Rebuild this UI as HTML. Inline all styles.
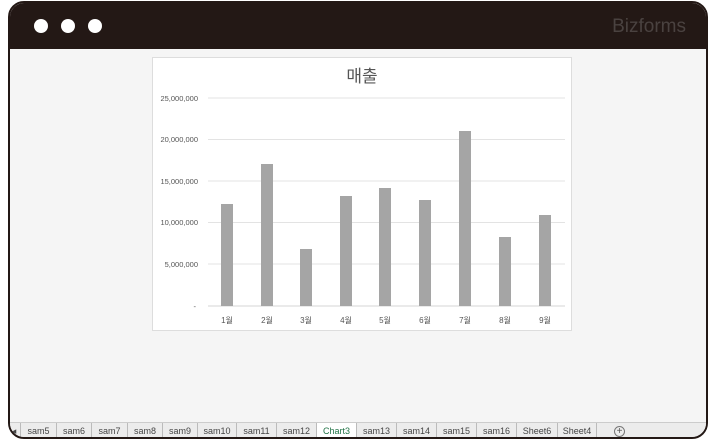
<!DOCTYPE html><html><head><meta charset="utf-8"><style>
*{margin:0;padding:0;box-sizing:border-box}
body{width:715px;height:440px;background:#fff;position:relative;overflow:hidden;font-family:"Liberation Sans","Noto Sans CJK KR",sans-serif}
.frame{position:absolute;left:8px;top:1px;width:700px;height:438px;border:2px solid #231815;border-radius:16px;background:#f5f5f5;overflow:hidden}
.hd{position:absolute;left:0;top:0;right:0;height:46px;background:#231815}
.dot{position:absolute;top:16px;width:14px;height:14px;border-radius:50%;background:#fff}
.logo{position:absolute;right:20px;top:13px;color:#4a4240;font-size:19px}
.chart{position:absolute;left:142px;top:54px;width:420px;height:274px;background:#fff;border:1px solid #ddd}
.tabs{position:absolute;left:-2px;top:419px;right:0;height:17px;background:#ececec;border-top:1px solid #ccc;font-size:9px;color:#444}
.tab{position:absolute;top:0;height:17px;line-height:16px;text-align:center;border-right:1px solid #bbb}
</style></head><body>
<div class="frame">
<div class="hd"><div class="dot" style="left:24px"></div><div class="dot" style="left:51px"></div><div class="dot" style="left:78px"></div><div class="logo">Bizforms</div></div>
<div class="chart">
<svg width="420" height="274" viewBox="152 57 420 274" style="position:absolute;left:-1px;top:-1px" font-family="Liberation Sans,Noto Sans CJK KR,sans-serif">
<text x="362" y="82" font-size="17" fill="#555" text-anchor="middle">매출</text>
<g stroke="#e3e3e3" stroke-width="1">
<line x1="208" x2="565" y1="98" y2="98"/><line x1="208" x2="565" y1="139.5" y2="139.5"/><line x1="208" x2="565" y1="181" y2="181"/><line x1="208" x2="565" y1="222.5" y2="222.5"/><line x1="208" x2="565" y1="264" y2="264"/><line x1="208" x2="565" y1="306" y2="306" stroke="#d5d5d5"/></g>
<g font-size="7.5" fill="#555" text-anchor="end">
<text x="198" y="101">25,000,000</text><text x="198" y="142">20,000,000</text><text x="198" y="184">15,000,000</text><text x="198" y="225">10,000,000</text><text x="198" y="267">5,000,000</text><text x="196" y="309">-</text></g>
<g fill="#a5a5a5">
<rect x="221" y="204" width="12" height="102"/><rect x="261" y="164" width="12" height="142"/><rect x="300" y="249" width="12" height="57"/><rect x="340" y="196" width="12" height="110"/><rect x="379" y="188" width="12" height="118"/><rect x="419" y="200" width="12" height="106"/><rect x="459" y="131" width="12" height="175"/><rect x="499" y="237" width="12" height="69"/><rect x="539" y="215" width="12" height="91"/></g>
<g font-size="8" fill="#555" text-anchor="middle">
<text x="227" y="323">1월</text><text x="267" y="323">2월</text><text x="306" y="323">3월</text><text x="346" y="323">4월</text><text x="385" y="323">5월</text><text x="425" y="323">6월</text><text x="465" y="323">7월</text><text x="505" y="323">8월</text><text x="545" y="323">9월</text></g>
</svg></div>
<div class="tabs">
<div class="tab" style="left:0;width:13px">◂</div>
<div class="tab" style="left:13px;width:36px">sam5</div>
<div class="tab" style="left:49px;width:35px">sam6</div>
<div class="tab" style="left:84px;width:36px">sam7</div>
<div class="tab" style="left:120px;width:35px">sam8</div>
<div class="tab" style="left:155px;width:35px">sam9</div>
<div class="tab" style="left:190px;width:39px">sam10</div>
<div class="tab" style="left:229px;width:40px">sam11</div>
<div class="tab" style="left:269px;width:40px">sam12</div>
<div class="tab" style="left:309px;width:40px;background:#fff;color:#217346;border-bottom:2px solid #217346">Chart3</div>
<div class="tab" style="left:349px;width:40px">sam13</div>
<div class="tab" style="left:389px;width:40px">sam14</div>
<div class="tab" style="left:429px;width:40px">sam15</div>
<div class="tab" style="left:469px;width:40px">sam16</div>
<div class="tab" style="left:509px;width:41px">Sheet6</div>
<div class="tab" style="left:550px;width:39px">Sheet4</div>
<div style="position:absolute;left:606px;top:3px;width:11px;height:11px;border:1px solid #777;border-radius:50%;font-size:10px;line-height:9px;text-align:center;color:#555">+</div>
</div>
</div>
</body></html>
